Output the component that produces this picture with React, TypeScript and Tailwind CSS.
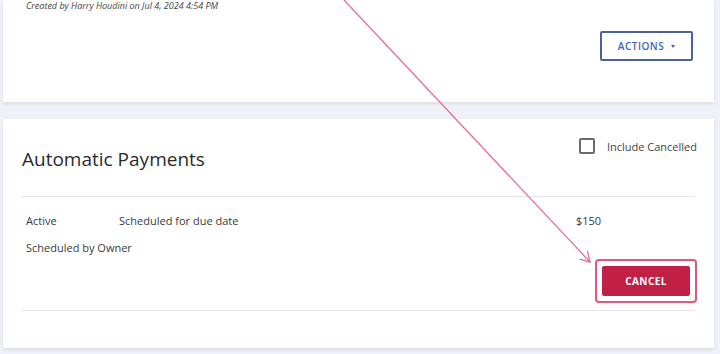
export default function App() {
  return (
    <div
      className="relative w-[720px] h-[354px] overflow-hidden bg-[#eef1f7] pl-[3px] pr-[6px] text-[#333]"
      style={{ fontFamily: '"Open Sans", "Noto Sans", sans-serif' }}
    >
      {/* Top card (cut off) */}
      <div className="h-[102px] bg-white shadow-[0_2px_3px_rgba(0,0,0,0.08)] pl-[23px] pr-[21px] flex flex-col">
        <p className="text-[9px] leading-[12px] italic text-[#444]">
          Created by Harry Houdini on Jul 4, 2024 4:54 PM
        </p>
        <div className="flex justify-end mt-[19px]">
          <button className="w-[93px] h-[30px] border-2 border-[#4a6297] rounded-[2px] flex items-center justify-center gap-[7px] text-[10px] font-semibold tracking-[0.5px] text-[#3d64b3]">
            ACTIONS
            <span className="w-0 h-0 border-l-[2.5px] border-r-[2.5px] border-t-[3px] border-l-transparent border-r-transparent border-t-[#3d64b3]" />
          </button>
        </div>
      </div>

      {/* Automatic payments card */}
      <div className="mt-[17px] h-[229px] bg-white shadow-[0_2px_3px_rgba(0,0,0,0.08)] px-[19px]">
        <div className="h-[77px] flex justify-between">
          <h2 className="pt-[28px] text-[19px] leading-[24px] text-[#2b2b2b]">Automatic Payments</h2>
          <label className="flex items-start gap-[12px] pt-[19px] -mr-[2px]">
            <span className="w-[16px] h-[16px] border-2 border-[#6b6b6b] rounded-[2px]" />
            <span className="text-[11px] leading-[16px] text-[#444] pt-[1px]">Include Cancelled</span>
          </label>
        </div>
        <div className="border-t border-[#e3e6ea]" />
        <div className="pt-[17px] pl-[4px] text-[11px] leading-[14px] text-[#3a3a3a]">
          <div className="flex">
            <span className="w-[93px]">Active</span>
            <span className="w-[457px]">Scheduled for due date</span>
            <span>$150</span>
          </div>
          <div className="mt-[13px]">Scheduled by Owner</div>
        </div>
        <div className="flex justify-end mt-[4px] -mr-[2px]">
          <div className="border-2 border-[#e2577e] rounded-[4px] p-[5px]">
            <button className="w-[88px] h-[30px] bg-[#c21f45] rounded-[2px] text-white text-[10px] font-bold tracking-[0.4px]">
              CANCEL
            </button>
          </div>
        </div>
        <div className="mt-[7px] border-t border-[#e3e6ea]" />
      </div>

      {/* Annotation arrow */}
      <svg className="absolute inset-0 pointer-events-none" width="720" height="354" viewBox="0 0 720 354">
        <line x1="344" y1="0" x2="590" y2="262" stroke="#e56f8e" strokeWidth="1.3" />
        <polyline points="587.5,251 590,262 579.5,259" fill="none" stroke="#e56f8e" strokeWidth="1.3" />
      </svg>
    </div>
  );
}
